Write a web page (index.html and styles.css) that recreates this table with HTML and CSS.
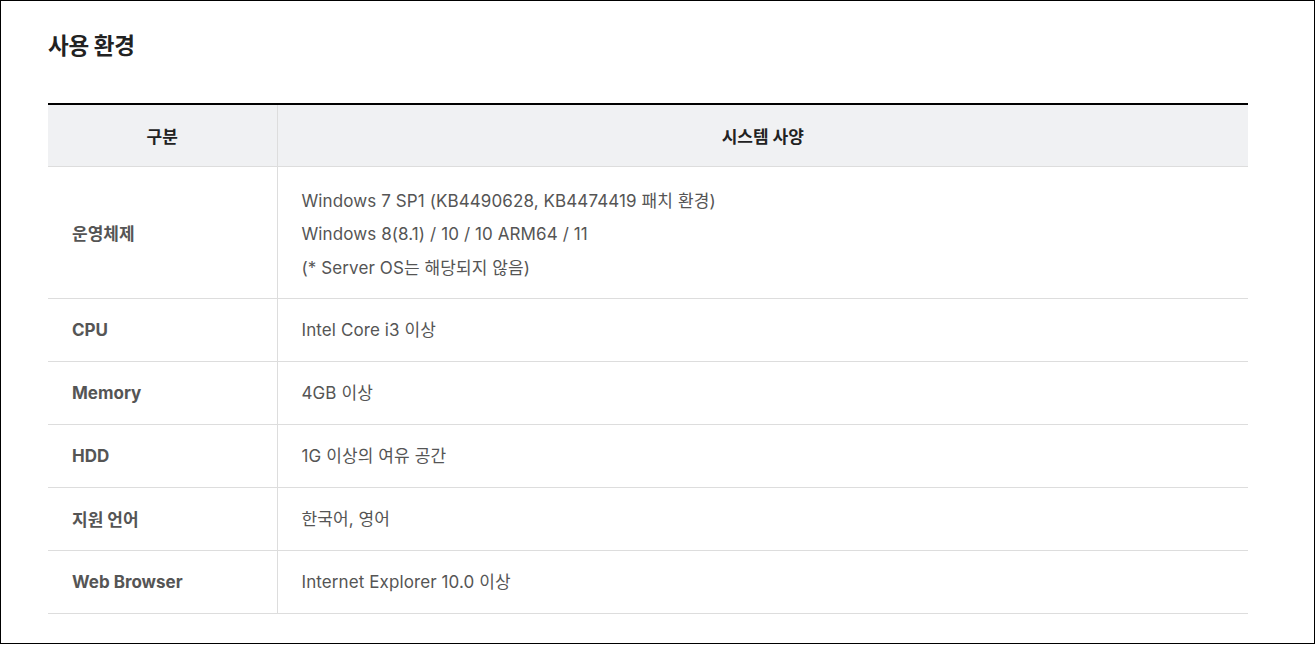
FILE: index.html
```html
<!DOCTYPE html>
<html lang="ko">
<head>
<meta charset="utf-8">
<title>사용 환경</title>
<link rel="stylesheet" href="styles.css">
</head>
<body>
<div class="frame">
  <h2 class="title">사용 환경</h2>
  <table class="spec">
    <thead>
      <tr><th class="col-name">구분</th><th>시스템 사양</th></tr>
    </thead>
    <tbody>
      <tr class="multi">
        <th>운영체제</th>
        <td>
          <p>Windows 7 SP1 (KB4490628, KB4474419 패치 환경)</p>
          <p>Windows 8(8.1) / 10 / 10 ARM64 / 11</p>
          <p>(* Server OS는 해당되지 않음)</p>
        </td>
      </tr>
      <tr><th>CPU</th><td>Intel Core i3 이상</td></tr>
      <tr><th>Memory</th><td>4GB 이상</td></tr>
      <tr><th>HDD</th><td>1G 이상의 여유 공간</td></tr>
      <tr><th>지원 언어</th><td>한국어, 영어</td></tr>
      <tr><th>Web Browser</th><td>Internet Explorer 10.0 이상</td></tr>
    </tbody>
  </table>
</div>
</body>
</html>
```
FILE: styles.css
```css
* { box-sizing: border-box; }
html, body { margin: 0; padding: 0; background: #fff; }
body {
  font-family: Inter, "Noto Sans CJK KR", sans-serif;
  color: #555;
}
.frame {
  width: 1315px;
  height: 644px;
  border: 1px solid #000;
  padding: 30px 0 0 47px;
}
.title {
  margin: 0;
  font-size: 22.5px;
  line-height: 30px;
  font-weight: 700;
  color: #222;
  letter-spacing: -0.3px;
}
.spec {
  margin-top: 42px;
  width: 1200px;
  border-collapse: collapse;
  border-top: 2px solid #000;
  font-size: 17px;
}
.spec thead th {
  background: #f0f1f3;
  height: 62px;
  padding: 0;
  font-weight: 700;
  color: #222;
  text-align: center;
  border-bottom: 1px solid #ddd;
}
.spec thead th.col-name { width: 229px; border-right: 1px solid #ddd; }
.spec tbody th {
  width: 229px;
  text-align: left;
  padding: 0 24px;
  font-weight: 700;
  color: #555;
  border-right: 1px solid #ddd;
  border-bottom: 1px solid #ddd;
}
.spec tbody td {
  height: 63px;
  padding: 0 24px;
  color: #555;
  line-height: 32px;
  border-bottom: 1px solid #ddd;
  letter-spacing: 0.1px;
}
.spec tbody tr.multi td { height: 132px; padding-top: 6px; }
.spec p { margin: 0; line-height: 33.5px; }
```
